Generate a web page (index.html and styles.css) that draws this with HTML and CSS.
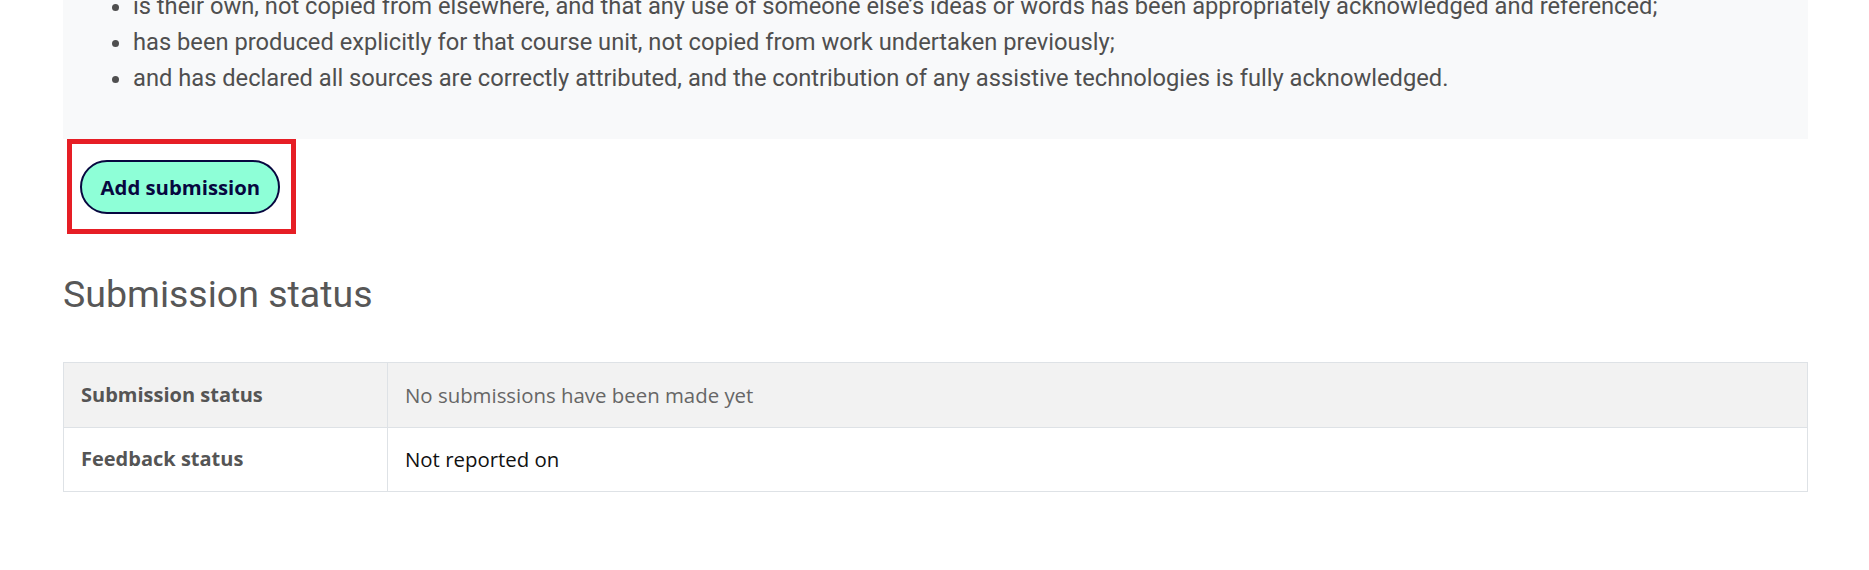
FILE: index.html
```html
<!DOCTYPE html>
<html lang="en">
<head>
<meta charset="utf-8">
<title>Submission</title>
<link rel="stylesheet" href="styles.css">
</head>
<body>
<div class="main">
  <div class="panel">
    <ul class="declaration">
      <li>is their own, not copied from elsewhere, and that any use of someone else’s ideas or words has been appropriately acknowledged and referenced;</li>
      <li>has been produced explicitly for that course unit, not copied from work undertaken previously;</li>
      <li>and has declared all sources are correctly attributed, and the contribution of any assistive technologies is fully acknowledged.</li>
    </ul>
  </div>
  <div class="highlight">
    <button class="btn-submit" type="button">Add submission</button>
  </div>
  <h2 class="section-title">Submission status</h2>
  <table class="status-table">
    <tbody>
      <tr class="row-shaded">
        <th>Submission status</th>
        <td class="muted">No submissions have been made yet</td>
      </tr>
      <tr class="row-plain">
        <th>Feedback status</th>
        <td>Not reported on</td>
      </tr>
    </tbody>
  </table>
</div>
</body>
</html>
```

FILE: styles.css
```css
* { box-sizing: border-box; }
html, body { margin: 0; padding: 0; background: #fff; }
body { font-family: Roboto, "Noto Sans", sans-serif; color: #4f4f4f; }
.main { padding: 0 61px 0 63px; }
.panel { background: #f8f9fa; margin-top: -12px; padding: 0 0 43px 0; }
.declaration { margin: 0; padding-left: 70px; font-size: 23.7px; line-height: 36px; color: #4f4f4f; }
.highlight { display: inline-block; margin-left: 3.7px; border: 5.6px solid #e61e25; padding: 16px 10.7px 15.3px 8.7px; }
.btn-submit { display: block; width: 200px; height: 54px; border-radius: 27px; border: 2.5px solid #07073f; background: #8effd7; color: #07073f; font-family: "Open Sans", "Noto Sans", sans-serif; font-weight: 700; font-size: 20.3px; padding: 0; cursor: pointer; }
.section-title { font-family: Roboto, sans-serif; font-weight: 400; font-size: 37.5px; line-height: 45px; color: #575757; margin: 37.5px 0 45px 0; }
.status-table { width: 100%; border-collapse: collapse; border: 1px solid #dee2e6; font-family: "Open Sans", "Noto Sans", sans-serif; font-size: 20.4px; }
.status-table th, .status-table td { border: 1px solid #dee2e6; padding: 0 17px; line-height: 30px; text-align: left; vertical-align: middle; }
.row-shaded th, .row-shaded td { height: 65px; }
.row-plain th, .row-plain td { height: 64px; }
.status-table th { width: 324px; font-weight: 700; font-size: 20px; color: #555; }
.status-table td { color: #111; font-weight: 400; }
.status-table td.muted { color: #666; }
.row-shaded { background: #f2f2f2; }
```
